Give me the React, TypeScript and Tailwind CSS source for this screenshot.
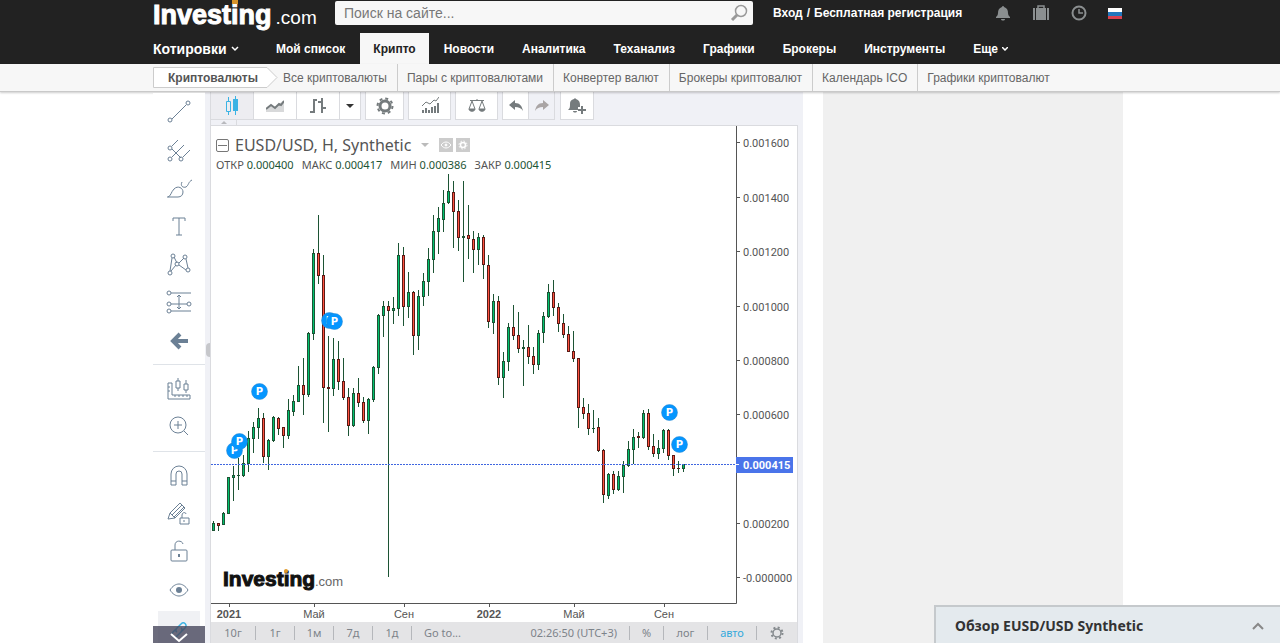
import React from 'react';

const NAV = ['Мой список', 'Крипто', 'Новости', 'Аналитика', 'Теханализ', 'Графики', 'Брокеры', 'Инструменты'];

const SUB_NAV = [
    'Все криптовалюты',
    'Пары с криптовалютами',
    'Конвертер валют',
    'Брокеры криптовалют',
    'Календарь ICO',
    'Графики криптовалют',
];

const RANGES = ['1г', '1м', '7д', '1д'];

// [high, body top, body bottom, low, 1 = up / 0 = down], one candle every 5px
const CANDLES = [
    [521, 523, 531, 531, 1], [523, 523, 526, 531, 0], [512, 513, 525, 525, 1], [477, 477, 514, 514, 1],
    [466, 475, 478, 501, 1], [458, 475, 476, 490, 1], [455, 463, 476, 477, 1], [431, 438, 464, 472, 1],
    [422, 427, 439, 453, 1], [408, 418, 428, 439, 1], [413, 418, 457, 463, 0], [439, 440, 457, 470, 1],
    [416, 417, 441, 442, 1], [417, 418, 429, 435, 0], [427, 427, 436, 448, 0], [399, 410, 436, 439, 1],
    [395, 401, 412, 416, 1], [366, 385, 402, 402, 1], [358, 385, 395, 415, 0], [332, 333, 395, 397, 1],
    [249, 253, 334, 340, 1], [215, 253, 276, 284, 0], [255, 275, 388, 423, 0], [336, 387, 389, 432, 0],
    [338, 359, 389, 396, 1], [341, 359, 382, 390, 0], [358, 381, 398, 400, 0], [388, 397, 426, 436, 0],
    [388, 393, 426, 427, 1], [378, 393, 403, 407, 0], [397, 402, 421, 423, 0], [398, 399, 421, 434, 1],
    [366, 367, 400, 402, 1], [314, 315, 368, 374, 1], [301, 306, 316, 337, 1], [301, 306, 311, 577, 0],
    [297, 308, 311, 324, 1], [243, 255, 309, 316, 1], [247, 255, 307, 326, 0], [272, 292, 307, 318, 1],
    [291, 292, 336, 355, 0], [290, 296, 336, 350, 1], [273, 281, 297, 306, 1], [248, 259, 282, 296, 1],
    [215, 231, 260, 273, 1], [207, 218, 232, 254, 1], [190, 203, 220, 232, 1], [174, 191, 203, 204, 1],
    [181, 192, 212, 248, 0], [200, 211, 238, 251, 0], [181, 236, 238, 282, 1], [205, 235, 239, 259, 0],
    [231, 239, 250, 273, 0], [233, 237, 250, 265, 1], [235, 237, 265, 279, 0], [255, 265, 322, 328, 0],
    [294, 301, 323, 334, 1], [296, 301, 378, 385, 0], [352, 361, 378, 398, 1], [323, 327, 362, 371, 1],
    [305, 327, 336, 340, 0], [312, 335, 349, 353, 0], [340, 347, 349, 386, 1], [325, 347, 357, 364, 0],
    [347, 356, 365, 374, 0], [330, 333, 365, 370, 1], [312, 316, 333, 343, 1], [284, 292, 317, 318, 1],
    [280, 292, 308, 316, 0], [303, 307, 324, 332, 0], [314, 323, 335, 338, 0], [326, 334, 352, 352, 0],
    [331, 351, 359, 362, 0], [358, 358, 408, 428, 0], [398, 407, 414, 419, 0], [404, 413, 429, 435, 0],
    [410, 428, 429, 433, 1], [418, 427, 451, 452, 0], [449, 450, 495, 503, 0], [473, 474, 496, 499, 1],
    [471, 474, 490, 494, 0], [471, 476, 490, 491, 1], [461, 465, 477, 493, 1], [441, 449, 466, 467, 1],
    [429, 437, 450, 464, 1], [432, 436, 438, 448, 0], [410, 413, 438, 439, 1], [409, 413, 447, 450, 0],
    [434, 446, 454, 457, 0], [440, 448, 454, 459, 1], [429, 430, 449, 453, 1], [429, 430, 456, 460, 0],
    [455, 455, 469, 476, 0], [461, 468, 469, 473, 0], [464, 464, 469, 472, 1],
];

const MARKERS = [[234, 450], [239, 441], [259, 391], [329, 320], [334, 321], [669, 412], [679, 444]];

const PRICES: [string, number][] = [
    ['0.001600', 142],
    ['0.001400', 197],
    ['0.001200', 251],
    ['0.001000', 306],
    ['0.000800', 360],
    ['0.000600', 414],
    ['0.000200', 523],
    ['-0.000000', 577],
];

const DATES: [string, number, boolean][] = [
    ['2021', 229, true],
    ['Май', 314, false],
    ['Сен', 404, false],
    ['2022', 489, true],
    ['Май', 574, false],
    ['Сен', 664, false],
];

const OHLC = [
    ['ОТКР', '0.000400'],
    ['МАКС', '0.000417'],
    ['МИН', '0.000386'],
    ['ЗАКР', '0.000415'],
];

const TOOLS: { label: string; icon: React.ReactNode }[][] = [
    [
        {
            label: 'Линия тренда',
            icon: <><path d="M6 20 20 6" /><circle cx="4" cy="21" r="2" /><circle cx="22" cy="4" r="2" /></>,
        },
        {
            label: 'Вилы',
            icon: <><path d="M6 9l6-6M6 20 18 8M17 20l7-7M6 12l9 9" /><circle cx="4" cy="11" r="2" /><circle cx="4" cy="22" r="2" /><circle cx="15" cy="22" r="2" /></>,
        },
        {
            label: 'Кисть',
            icon: <path d="M2 22c3-1 3-5 6-8 4-4 9-1 9 3 0 3-2 5-5 5H1M16 7c-2 4 1 6 4 5 3-2 2-5 6-7" />,
        },
        {
            label: 'Текст',
            icon: <path d="M7 8V5h12v3M13 5v17M10 22h6" />,
        },
        {
            label: 'Паттерны',
            icon: <><path d="M4 20 6 7M8 6l3 6M13 12l5-5M13 14l7 5M5 20l5-6M20 8l2 9" /><circle cx="4" cy="22" r="2" /><circle cx="7" cy="5" r="2" /><circle cx="11" cy="13" r="2" /><circle cx="19" cy="6" r="2" /><circle cx="22" cy="19" r="2" /></>,
        },
        {
            label: 'Прогноз',
            icon: <><path d="M5 4h20M5 15h16M5 22h20M13 6v14M11 8l2-2 2 2M11 18l2 2 2-2" /><circle cx="3" cy="4" r="2" /><circle cx="3" cy="15" r="2" /><circle cx="23" cy="15" r="2" /><circle cx="3" cy="22" r="2" /></>,
        },
        {
            label: 'Назад',
            icon: <path d="M14 7 7 14l7 7M8 14h14" strokeWidth="4" />,
        },
    ],
    [
        {
            label: 'Измерить',
            icon: <><path d="M2 7h4v12h18v4H2zM2 11h2M2 15h2M9 19v2M13 19v2M17 19v2M21 19v2" /><path d="M10 5h4v7h-4zM12 2v3M12 12v3M18 8h4v6h-4zM20 4v4M20 14v3" /></>,
        },
        {
            label: 'Увеличить',
            icon: <><circle cx="12" cy="11" r="8" /><path d="M12 7v8M8 11h8M18 17l4 4" /></>,
        },
    ],
    [
        {
            label: 'Магнит',
            icon: <path d="M5 22V11a8 8 0 0 1 16 0v11h-5V11a3 3 0 0 0-6 0v11zM5 18h5M16 18h5" />,
        },
        {
            label: 'Режим рисования',
            icon: <><path d="M2 18 4 12 14 2l5 5L9 17zM4 12l5 5M6 14 16 4M8 16 18 6" /><path d="M14 17h9v6h-9zM16 17v-3c0-3 4-3 4-1M18 19v2" /></>,
        },
        {
            label: 'Заблокировать',
            icon: <><rect x="5" y="11" width="16" height="11" rx="1" /><path d="M9 11V6c0-5 7-5 8-1" /><path d="M13 15v3" strokeWidth="2" /></>,
        },
        {
            label: 'Скрыть',
            icon: <><path d="M4 13c5-8 13-8 18 0-5 8-13 8-18 0z" /><circle cx="13" cy="13" r="3" fill="#6b8095" stroke="none" /></>,
        },
    ],
];

function BrandLogo() {
    return (
        <a href="#" className="relative flex w-[182px] shrink-0 items-baseline gap-1 text-white">
            <span className="text-[27px] leading-[30px] font-bold [-webkit-text-stroke:1px_white]">Investing</span>
            <span className="text-[19px] leading-[30px]">.com</span>
            <span className="absolute top-0 left-[79px] h-1 w-[6px] bg-[#d6942b]"></span>
        </a>
    );
}

function Header() {
    return (
        <header className="shrink-0">
            <div className="bg-[#222] pr-1">
                <div className="mx-auto w-full max-w-[970px]">

                    {/* Logo, search, login */}
                    <div className="flex h-[33px] items-start">
                        <BrandLogo />
                        <form className="mt-px flex h-6 w-[418px] items-center rounded-xs bg-[#f7f7f7] px-[9px]">
                            <input
                                type="text"
                                aria-label="Поиск на сайте"
                                placeholder="Поиск на сайте..."
                                className="min-w-0 flex-1 bg-transparent text-sm outline-none placeholder:text-[#777]"
                            />
                            <button type="button" aria-label="Найти" className="-mr-1">
                                <svg width="18" height="18" viewBox="0 0 18 18" fill="none" stroke="#999">
                                    <circle cx="11" cy="7" r="5.5" strokeWidth="1.5" />
                                    <path d="M7 11 2 16" strokeWidth="3" />
                                </svg>
                            </button>
                        </form>
                        <div className="ml-5 flex h-[26px] items-center gap-1 text-xs font-bold text-white">
                            <a href="#">Вход</a>
                            <span>/</span>
                            <a href="#">Бесплатная регистрация</a>
                        </div>
                        <div className="ml-auto flex h-[26px] items-center gap-[21px] pr-px">
                            <button type="button" aria-label="Уведомления">
                                <svg width="16" height="16" viewBox="0 0 16 16" fill="#8b8f90">
                                    <path d="M8 1c1 0 1 1 1 1 3 1 4 3 4 6 0 2 1 3 2 4v1H1v-1c1-1 2-2 2-4 0-3 1-5 4-6 0 0 0-1 1-1zM6 14h4c0 2-4 2-4 0z" />
                                </svg>
                            </button>
                            <button type="button" aria-label="Портфель">
                                <svg width="18" height="16" viewBox="0 0 18 16" fill="#8b8f90">
                                    <path d="M1 3h2v12H1zM4 3h10v12H4zM15 3h2v12h-2z" />
                                    <path d="M6 3V1h6v2" fill="none" stroke="#8b8f90" strokeWidth="1.5" />
                                </svg>
                            </button>
                            <button type="button" aria-label="История">
                                <svg width="16" height="16" viewBox="0 0 16 16" fill="none" stroke="#8b8f90" strokeWidth="2">
                                    <circle cx="8" cy="8" r="6.5" />
                                    <path d="M8 4v4h4" strokeWidth="1.5" />
                                </svg>
                            </button>
                            <button type="button" aria-label="Язык" className="flex h-[11px] w-[14px] flex-col">
                                <span className="h-1 w-full bg-white"></span>
                                <span className="h-1 w-full bg-[#2176bd]"></span>
                                <span className="h-[3px] w-full bg-[#d8414f]"></span>
                            </button>
                        </div>
                    </div>

                    {/* Main menu */}
                    <nav className="flex h-[31px] text-xs font-bold text-white">
                        <a href="#" className="flex w-[110px] items-center gap-1 text-sm">
                            Котировки
                            <svg width="8" height="6" viewBox="0 0 8 6" fill="none" stroke="#fff" strokeWidth="1.5"><path d="M1 1l3 3 3-3" /></svg>
                        </a>
                        <div className="flex gap-[2px]">
                            {NAV.map((item) => (
                                <a
                                    key={item}
                                    href="#"
                                    className={
                                        item === 'Крипто'
                                            ? 'flex items-center bg-[#f7f7f7] px-[13px] text-[#222]'
                                            : 'flex items-center px-[13px]'
                                    }
                                >
                                    {item}
                                </a>
                            ))}
                            <a href="#" className="flex items-center gap-1 px-[13px]">
                                Еще
                                <svg width="6" height="4" viewBox="0 0 6 4" fill="none" stroke="#fff" strokeWidth="1.5"><path d="M0 0l3 3 3-3" /></svg>
                            </a>
                        </div>
                    </nav>
                </div>
            </div>

            {/* Sub menu */}
            <div className="relative border-b border-[#c9c9c9] bg-[#f7f7f7] pr-1 shadow-[0_1px_2px_rgba(0,0,0,0.2)]">
                <nav className="mx-auto flex h-[27px] w-full max-w-[970px] items-center text-xs text-[#666]">
                    <a href="#" className="relative flex h-[21px] w-[125px] items-center pl-[15px] font-bold text-[#555]">
                        <svg className="absolute inset-0" width="125" height="21" fill="#fff" stroke="#ccc">
                            <path d="M.5.5H114l10 10-10 10H.5z" />
                        </svg>
                        <span className="relative">Криптовалюты</span>
                    </a>
                    <div className="flex h-full divide-x divide-[#ccc]">
                        {SUB_NAV.map((item) => (
                            <a key={item} href="#" className="flex items-center pr-[10px] pl-[9px] first:pl-[5px]">
                                {item}
                            </a>
                        ))}
                    </div>
                </nav>
            </div>
        </header>
    );
}

function DrawingTools() {
    return (
        <aside className="relative w-[52px] shrink-0 overflow-hidden bg-white">
            {TOOLS.map((group, i) => (
                <div key={i} className={i < 2 ? 'mb-[5px] border-b border-[#dfe3e8] pb-[5px]' : ''}>
                    {group.map((tool) => (
                        <button key={tool.label} type="button" aria-label={tool.label} className="flex h-[38px] w-full items-center justify-center">
                            <svg width="26" height="26" viewBox="0 0 26 26" fill="none" stroke="#6b8095" className="overflow-visible">
                                {tool.icon}
                            </svg>
                        </button>
                    ))}
                </div>
            ))}
            <button type="button" aria-label="Связать" className="mx-auto mt-[2px] flex h-[38px] w-[42px] items-center justify-center bg-[#f0f1f4]">
                <svg width="20" height="20" viewBox="0 0 20 20" fill="none" stroke="#3bb3e4" strokeWidth="1.5">
                    <path d="M8 12c-2-1-1-3 0-4l4-4c3-3 7 1 4 4l-3 3" />
                    <path d="M12 8c2 1 1 3 0 4l-4 4c-3 3-7-1-4-4l3-3" />
                </svg>
            </button>
            <button type="button" aria-label="Прокрутить вниз" className="absolute inset-x-0 bottom-0 flex h-[17px] items-end justify-center bg-[#47475c]/80">
                <svg width="20" height="12" viewBox="0 0 20 12" fill="none" stroke="#fff" strokeWidth="2"><path d="M2 3l8 7 8-7" /></svg>
            </button>
        </aside>
    );
}

function ChartToolbar() {
    const btn = 'flex h-full items-center justify-center border-r border-[#dadbdf] bg-white';
    const group = 'flex h-full border-b border-l border-[#dadbdf]';

    return (
        <div className="flex h-[28px] shrink-0 text-[#757b7d]">
            <div className={`${group} mr-1`}>
                <button type="button" aria-label="Свечи" className="flex h-full w-[43px] items-center justify-center border-r border-[#dadbdf] bg-[#ededf1]">
                    <svg width="14" height="20" viewBox="0 0 14 20" stroke="#3bb3e4" fill="none">
                        <path d="M1.5 5.5h4v10h-4zM3.5 1v4M3.5 16v3" />
                        <path d="M8 3h5v12H8zM10 0h1v19h-1z" fill="#3bb3e4" stroke="none" />
                    </svg>
                </button>
                <button type="button" aria-label="Область" className={`${btn} w-[43px]`}>
                    <svg width="18" height="14" viewBox="0 0 18 14" fill="none">
                        <path d="M0 10l5-4 4 2 9-7v12H0z" fill="#d8d9da" />
                        <path d="M0 10l5-4 4 3 4-4 2 1 3-4" stroke="#757b7d" strokeWidth="2" />
                    </svg>
                </button>
                <button type="button" aria-label="Бары" className={`${btn} w-[43px]`}>
                    <svg width="18" height="18" viewBox="0 0 18 18" fill="none" stroke="#757b7d" strokeWidth="2">
                        <path d="M1 15h4M5 16V2M5 3h3M9 5h4M13 1v15M13 11h4" />
                    </svg>
                </button>
                <button type="button" aria-label="Другие типы" className={`${btn} w-[21px]`}>
                    <svg width="8" height="4" viewBox="0 0 8 4" fill="#333"><path d="M0 0h8L4 4z" /></svg>
                </button>
            </div>
            <div className={`${group} mr-1`}>
                <button type="button" aria-label="Настройки" className={`${btn} w-[38px]`}>
                    <svg width="18" height="18" viewBox="0 0 18 18" fill="none" stroke="#757b7d">
                        <circle cx="9" cy="9" r="5" strokeWidth="3" />
                        <circle cx="9" cy="9" r="7.5" strokeWidth="2" strokeDasharray="3 2.89" />
                    </svg>
                </button>
            </div>
            <div className={`${group} mr-1`}>
                <button type="button" aria-label="Индикаторы" className={`${btn} w-[42px]`}>
                    <svg width="18" height="17" viewBox="0 0 18 17" fill="none" stroke="#757b7d">
                        <path d="M1 9l4-4 4 2 4-4 2 1 3-4" />
                        <path d="M2 16v-3M5 16v-5M8 16v-3M11 16v-6M14 16V9M17 16V6" strokeWidth="2" />
                    </svg>
                </button>
            </div>
            <div className={`${group} mr-1`}>
                <button type="button" aria-label="Сравнить" className={`${btn} w-[42px]`}>
                    <svg width="18" height="16" viewBox="0 0 18 16" fill="none" stroke="#757b7d">
                        <path d="M2 2.5h14M9 1v2M4 3l-3 8M4 3l3 8M14 3l-3 8M14 3l3 8" />
                        <path d="M1 11h6c0 3-6 3-6 0zM11 11h6c0 3-6 3-6 0z" fill="#757b7d" />
                    </svg>
                </button>
            </div>
            <div className={`${group} mr-[5px]`}>
                <button type="button" aria-label="Отменить" className={`${btn} w-[26px]`}>
                    <svg width="14" height="12" viewBox="0 0 14 12" fill="#757b7d"><path d="M0 5l6-5v3c5 0 7 3 8 8-2-3-4-4-8-4v3z" /></svg>
                </button>
                <button type="button" aria-label="Повторить" className="flex h-full w-[26px] items-center justify-center border-r border-[#dadbdf]">
                    <svg width="14" height="12" viewBox="0 0 14 12" fill="#aaa5a5"><path d="M14 5L8 0v3C3 3 1 6 0 11c2-3 4-4 8-4v3z" /></svg>
                </button>
            </div>
            <div className={group}>
                <button type="button" aria-label="Создать уведомление" className={`${btn} w-[33px]`}>
                    <svg width="18" height="18" viewBox="0 0 18 18" fill="#757b7d">
                        <path d="M7 1l1 1c3 1 4 3 4 6v2h-2v3H0c2-2 2-3 2-6s1-4 4-5zM5 14h4c0 2-4 2-4 0z" />
                        <path d="M13 9h2v3h3v2h-3v3h-2v-3h-3v-2h3z" />
                    </svg>
                </button>
            </div>
        </div>
    );
}

function CandleChart() {
    return (
        <svg width="586" height="496" viewBox="211 126 586 496" className="block bg-white font-[Liberation_Sans,sans-serif]">
            {/* watermark */}
            <text x="223" y="586" fontSize="21" fontWeight="700" fill="#111" stroke="#111">Investing</text>
            <text x="315" y="586" fontSize="13" fill="#666">.com</text>
            <circle cx="286" cy="571" r="2" fill="#e09a2b" />

            {CANDLES.map(([high, top, bottom, low, up], i) => {
                const x = 213 + i * 5;
                return (
                    <g key={i} shapeRendering="crispEdges">
                        <rect x={x} y={high} width="1" height={low - high} fill="#1c5434" />
                        <rect x={x - 1} y={top} width="3" height={bottom - top} fill={up ? '#1c5434' : '#5a1a15'} />
                        {bottom - top > 2 && (
                            <rect x={x} y={top + 1} width="1" height={bottom - top - 2} fill={up ? '#00c26f' : '#ff5340'} />
                        )}
                    </g>
                );
            })}

            <path d="M211 464.5H736" stroke="#3f66e0" strokeDasharray="2 1" />

            {MARKERS.map(([x, y]) => (
                <g key={`${x}-${y}`}>
                    <circle cx={x + 0.5} cy={y + 0.5} r="8" fill="#0596ff" stroke="#2a86cc" strokeWidth="0.5" />
                    <text x={x + 0.5} y={y + 4} fontSize="10" fontWeight="700" textAnchor="middle" fill="#fff" className="font-[DejaVu_Sans,sans-serif]">P</text>
                </g>
            ))}

            {/* axes */}
            <path d="M736.5 126V603.5H211" fill="none" stroke="#555" />
            {PRICES.map(([label, y]) => (
                <g key={label}>
                    <path d={`M737 ${y + 0.5}h3`} stroke="#555" />
                    <text x="743" y={y + 5} fontSize="11" fill="#555" className="font-[Roboto,sans-serif]">{label}</text>
                </g>
            ))}
            {DATES.map(([label, x, strong]) => (
                <g key={x}>
                    <path d={`M${x + 0.5} 604v3`} stroke="#555" />
                    <text x={x} y="618" fontSize="11" fontWeight={strong ? 700 : 400} textAnchor="middle" fill="#555">{label}</text>
                </g>
            ))}

            {/* last price */}
            <rect x="736" y="457" width="57" height="16" fill="#4a74ea" />
            <path d="M736 464.5h3" stroke="#fff" />
            <text x="743" y="469" fontSize="11" fontWeight="700" fill="#fff" className="font-[Roboto,sans-serif]">0.000415</text>
        </svg>
    );
}

function Legend() {
    return (
        <div className="absolute top-[10px] left-[5px] font-[Noto_Sans,sans-serif] text-[#555]">
            <div className="flex h-[18px] items-center">
                <button type="button" aria-label="Свернуть" className="mr-[6px] flex h-[13px] w-[13px] items-center justify-center rounded-xs border border-[#777]">
                    <span className="h-px w-[9px] bg-[#777]"></span>
                </button>
                <span className="w-[182px] text-base leading-[18px] whitespace-nowrap">EUSD/USD, H, Synthetic</span>
                <svg width="8" height="4" viewBox="0 0 8 4" fill="#bbb" className="ml-1"><path d="M0 0h8L4 4z" /></svg>
                <button type="button" aria-label="Показать" className="ml-[10px] flex h-[14px] w-[14px] items-center justify-center bg-[#ccc]">
                    <svg width="10" height="8" viewBox="0 0 10 8" fill="none" stroke="#fff"><path d="M0 4c3-4 7-4 10 0-3 4-7 4-10 0z" /><circle cx="5" cy="4" r="1" fill="#fff" /></svg>
                </button>
                <button type="button" aria-label="Формат" className="ml-[3px] flex h-[14px] w-[14px] items-center justify-center bg-[#ccc]">
                    <svg width="10" height="10" viewBox="0 0 10 10" fill="none" stroke="#fff"><circle cx="5" cy="5" r="2.5" strokeWidth="1.5" /><circle cx="5" cy="5" r="4" strokeDasharray="1.6 1.54" /></svg>
                </button>
            </div>
            <div className="mt-[3px] flex gap-2 text-[11px] leading-4 whitespace-nowrap">
                {OHLC.map(([name, value]) => (
                    <span key={name}>
                        {name} <span className="text-[#1c5434]">{value}</span>
                    </span>
                ))}
            </div>
        </div>
    );
}

function ChartFooter() {
    const sep = <span className="h-[14px] w-px bg-[#b5b7bb]"></span>;

    return (
        <div className="flex h-[22px] items-center bg-[#e4e4e6] font-[Noto_Sans,sans-serif] text-[11px] text-[#7d838a]">
            <button type="button" className="w-[44px]">10г</button>
            {RANGES.map((range) => (
                <React.Fragment key={range}>
                    {sep}
                    <button type="button" className="w-[38px]">{range}</button>
                </React.Fragment>
            ))}
            {sep}
            <button type="button" className="ml-3">Go to...</button>
            <span className="mr-3 ml-auto">02:26:50 (UTC+3)</span>
            {sep}
            <button type="button" className="w-[33px]">%</button>
            {sep}
            <button type="button" className="w-[43px]">лог</button>
            {sep}
            <button type="button" className="w-[48px] text-[#35a9dc]">авто</button>
            {sep}
            <button type="button" aria-label="Параметры" className="flex w-[40px] justify-center">
                <svg width="14" height="14" viewBox="0 0 14 14" fill="none" stroke="#858a8e">
                    <circle cx="7" cy="7" r="4" strokeWidth="1.5" />
                    <circle cx="7" cy="7" r="5.5" strokeWidth="2" strokeDasharray="2 2.32" />
                </svg>
            </button>
        </div>
    );
}

export default function App() {
    return (
        <div className="flex h-screen flex-col overflow-hidden bg-white font-[Liberation_Sans,Arial,sans-serif]">
            <Header />

            <main className="min-h-0 flex-1 pr-1">
                <div className="mx-auto flex h-full w-full max-w-[970px]">
                    <div className="flex pt-px">
                        <DrawingTools />
                    </div>

                    {/* Chart widget */}
                    <section className="flex w-[598px] shrink-0 bg-[#f0f1f6]">
                        <div className="flex w-[5px] items-center justify-end pb-9">
                            <span className="h-[14px] w-[4px] rounded-l-full bg-[#c6c7cb]"></span>
                        </div>
                        <div className="flex w-[588px] flex-col">
                            <ChartToolbar />
                            <div className="flex h-[5px] w-[27px] shrink-0 items-end justify-center border-x border-[#dadbdf] pb-[1px]">
                                <svg width="6" height="3" viewBox="0 0 6 3" fill="#b8b9bd"><path d="M0 3h6L3 0z" /></svg>
                            </div>
                            <div className="relative border border-b-0 border-[#dadbdf]">
                                <CandleChart />
                                <Legend />
                                <ChartFooter />
                            </div>
                        </div>
                    </section>

                    <aside className="ml-5 min-w-0 flex-1 bg-[#f0f0f0]"></aside>
                </div>
            </main>

            {/* Docked overview */}
            <button type="button" className="fixed right-0 bottom-0 flex h-[38px] w-[346px] items-center justify-between border-t-2 border-l-2 border-[#c5c9cc] bg-[#e4eaee] pt-[2px] pr-4 pl-[19px] text-sm font-bold text-[#333] font-[Noto_Sans,sans-serif]">
                <span>Обзор EUSD/USD Synthetic</span>
                <svg width="12" height="8" viewBox="0 0 12 8" fill="none" stroke="#888" strokeWidth="2"><path d="M1 7l5-5 5 5" /></svg>
            </button>
        </div>
    );
}
